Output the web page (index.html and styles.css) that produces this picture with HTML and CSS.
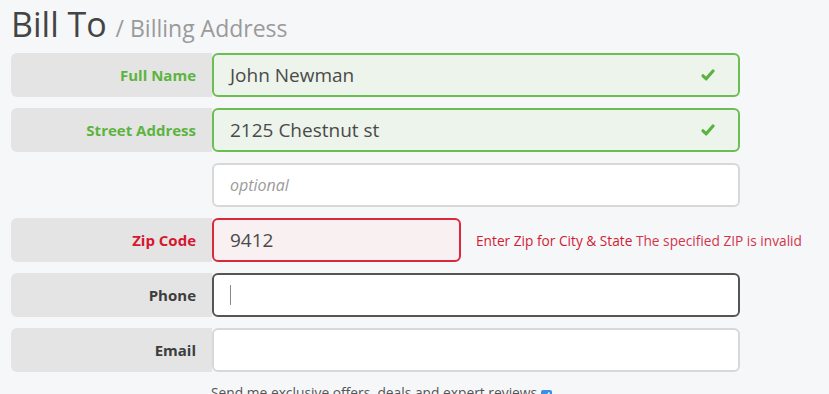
FILE: index.html
```html
<html lang="en">
<head>
  <meta charset="UTF-8" />
  <meta name="viewport" content="width=device-width, initial-scale=1.0" />
  <title>Bill To</title>
  <link rel="stylesheet" href="styles.css">
</head>
<body>
  <div class="form">
    <h1 class="title">Bill To <small>/ Billing Address</small></h1>

    <!-- Nombre completo -->
    <div class="row valid">
      <label class="label">Full Name</label>
      <div class="field">
        <span class="value">John Newman</span>
        <svg class="check" width="14" height="12" viewBox="0 0 14 12"><path d="M2 6.8 L5.2 9.8 L12 2" fill="none" stroke="#5bb33f" stroke-width="3.2" stroke-linecap="round" stroke-linejoin="round"/></svg>
      </div>
    </div>

    <div class="row valid">
      <label class="label">Street Address</label>
      <div class="field">
        <span class="value">2125 Chestnut st</span>
        <svg class="check" width="14" height="12" viewBox="0 0 14 12"><path d="M2 6.8 L5.2 9.8 L12 2" fill="none" stroke="#5bb33f" stroke-width="3.2" stroke-linecap="round" stroke-linejoin="round"/></svg>
      </div>
    </div>

    <div class="row">
      <div class="label blank"></div>
      <div class="field"><span class="placeholder">optional</span></div>
    </div>

    <!-- Zip con error -->
    <div class="row invalid">
      <label class="label">Zip Code</label>
      <div class="field short"><span class="value">9412</span></div>
      <p class="error"><span class="hint">Enter Zip for City &amp; State</span> The specified ZIP is invalid</p>
    </div>

    <div class="row focus">
      <label class="label">Phone</label>
      <div class="field"><span class="caret"></span></div>
    </div>

    <div class="row">
      <label class="label">Email</label>
      <div class="field"></div>
    </div>

    <p class="optin">Send me exclusive offers, deals and expert reviews <span class="box">
      <svg width="9" height="8" viewBox="0 0 9 8"><path d="M1.5 4.5 L3.5 6.3 L7.5 1.5" fill="none" stroke="#fff" stroke-width="1.4"/></svg>
    </span></p>
  </div>
</body>
</html>
```

FILE: styles.css
```css
/* Estilos generales */
body {
  margin: 0;
  padding: 0 11px;
  background: #f6f7f9;
  font-family: "Open Sans", Arial, sans-serif;
  color: #444;
}
.title {
  margin: 0 0 5px;
  height: 48px;
  font-size: 34px;
  line-height: 48px;
  font-weight: 400;
  color: #444;
  white-space: nowrap;
}
.title small {
  font-size: 23px;
  line-height: 1;
  color: #9a9a9a;
}
/* Cada fila del formulario */
.row {
  display: flex;
  align-items: center;
  height: 44px;
  margin-bottom: 11px;
}
.label {
  width: 201px;
  height: 44px;
  box-sizing: border-box;
  padding-right: 16px;
  background: #e4e4e4;
  border-radius: 6px 0 0 6px;
  display: flex;
  align-items: center;
  justify-content: flex-end;
  font-size: 15px;
  font-weight: 700;
  color: #3d3d3d;
}
.label.blank {
  background: transparent;
}
.field {
  width: 528px;
  height: 44px;
  box-sizing: border-box;
  border: 2px solid #d8d8d8;
  border-radius: 6px;
  background: #fff;
  display: flex;
  align-items: center;
  padding: 0 22px 0 16px;
  font-size: 19px;
  color: #4a4a4a;
}
.field.short {
  width: 249px;
}
.value {
  flex: 1;
}
.placeholder {
  font-size: 16px;
  font-style: italic;
  color: #9b9b9b;
}
.check {
  margin-right: 1px;
}
/* Estados */
.valid .label {
  color: #5cb43e;
}
.valid .field {
  border-color: #6cbd52;
  background: #edf4ec;
}
.invalid .label {
  color: #d5172f;
}
.invalid .field {
  border-color: #d9283f;
  background: #f8f0f1;
}
.focus .field {
  border-color: #555;
}
.caret {
  width: 1px;
  height: 20px;
  background: #888;
}
.error {
  margin: 0 0 0 15px;
  font-size: 13.7px;
  color: #d1354a;
  white-space: nowrap;
}
.error .hint {
  color: #d21b33;
}
.optin {
  margin: 0 0 0 200px;
  font-size: 13.8px;
  line-height: 20px;
  color: #555;
}
.optin .box {
  display: inline-flex;
  align-items: center;
  justify-content: center;
  width: 11px;
  height: 11px;
  border-radius: 2px;
  background: #3b8ee8;
  vertical-align: -1px;
}
```
